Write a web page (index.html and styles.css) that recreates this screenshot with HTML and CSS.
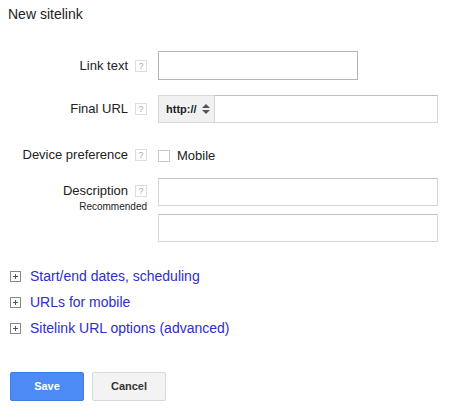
FILE: index.html
```html
<!DOCTYPE html>
<html>
<head>
<meta charset="utf-8">
<link rel="stylesheet" href="styles.css">
</head>
<body>
<div class="page">
  <h1 class="title">New sitelink</h1>
  <div class="form">
    <div class="row row-link">
      <div class="label">Link text</div>
      <div class="help">?</div>
      <div class="field"><div class="input input-short"></div></div>
    </div>
    <div class="row row-url">
      <div class="label">Final URL</div>
      <div class="help">?</div>
      <div class="field url">
        <div class="proto">http://
          <svg class="updown" width="8" height="10" viewBox="0 0 8 10"><path d="M0 4 L4 0 L8 4 Z M0 6 L8 6 L4 10 Z" fill="#555"/></svg>
        </div>
        <div class="input input-url"></div>
      </div>
    </div>
    <div class="row row-device">
      <div class="label">Device preference</div>
      <div class="help">?</div>
      <div class="field check"><span class="box"></span><span class="mobile">Mobile</span></div>
    </div>
    <div class="row row-desc">
      <div class="label">Description<div class="rec">Recommended</div></div>
      <div class="help">?</div>
      <div class="field stack">
        <div class="input input-long"></div>
        <div class="input input-long"></div>
      </div>
    </div>
  </div>
  <div class="expanders">
    <div class="exp"><span class="plus"></span><a class="link">Start/end dates, scheduling</a></div>
    <div class="exp"><span class="plus"></span><a class="link">URLs for mobile</a></div>
    <div class="exp"><span class="plus"></span><a class="link">Sitelink URL options (advanced)</a></div>
  </div>
  <div class="buttons">
    <div class="btn save">Save</div>
    <div class="btn cancel">Cancel</div>
  </div>
</div>
</body>
</html>
```
FILE: styles.css
```css
html, body { margin: 0; padding: 0; background: #fff; }
body { font-family: Arial, "Liberation Sans", sans-serif; color: #222; font-size: 13px; }
.page { width: 449px; height: 409px; position: relative; }
.title { margin: 0; padding: 5px 0 0 8px; font-size: 14px; font-weight: normal; line-height: 18px; color: #222; }
.form { padding-top: 28px; }
.row { display: flex; align-items: flex-start; }
.label { width: 128px; text-align: right; font-size: 13px; line-height: 16px; color: #222; }
.help { width: 10px; height: 10px; margin-left: 7px; border: 1px solid #ddd; font-size: 9px; line-height: 10px; text-align: center; color: #aaa; font-family: Arial, "Liberation Sans", sans-serif; }
.field { margin-left: 11px; }
.input { box-sizing: border-box; border: 1px solid #c0c0c0; border-top-color: #b0b0b0; background: #fff; }
.input-short { width: 200px; height: 29px; border-color: #b5b5b5; }
.row-link .label, .row-link .help { margin-top: 7px; }
.row-link .help { margin-top: 9px; }
.row-url { margin-top: 15px; }
.row-url .label { margin-top: 6px; }
.row-url .help { margin-top: 8px; }
.url { display: flex; }
.proto { box-sizing: border-box; width: 56px; height: 28px; background: #f1f1f1; border: 1px solid #d9d9d9; border-right: none; font-size: 11px; font-weight: bold; line-height: 26px; padding-left: 7px; color: #222; display: flex; align-items: center; gap: 5px; }
.updown { display: block; }
.input-url { width: 224px; height: 28px; border-color: #d5d5d5; border-top-color: #c0c0c0; }
.row-device { margin-top: 26px; }
.row-device .label { margin-top: -2px; }
.check { display: flex; align-items: center; }
.box { box-sizing: border-box; width: 12px; height: 12px; border: 1px solid #c8c8c8; background: #fff; }
.mobile { margin-left: 7px; font-size: 13px; line-height: 14px; color: #222; }
.row-desc { margin-top: 15px; }
.row-desc .label { margin-top: 5px; }
.row-desc .help { margin-top: 7px; }
.rec { font-size: 10px; line-height: 12px; margin-top: 2px; margin-right: -19px; color: #222; }
.stack { display: flex; flex-direction: column; gap: 8px; }
.input-long { width: 280px; height: 28px; border-color: #d5d5d5; border-top-color: #c0c0c0; }
.expanders { margin-top: 25px; padding-left: 10px; display: flex; flex-direction: column; gap: 8px; }
.exp { display: flex; align-items: center; height: 18px; }
.plus { box-sizing: border-box; width: 11px; height: 11px; border: 1px solid #888; position: relative; margin-right: 9px; }
.plus::before { content: ""; position: absolute; left: 2px; top: 4px; width: 5px; height: 1px; background: #555; }
.plus::after { content: ""; position: absolute; left: 4px; top: 2px; width: 1px; height: 5px; background: #555; }
.link { color: #2d2dd2; font-size: 14px; line-height: 18px; text-decoration: none; }
.buttons { display: flex; gap: 8px; margin-top: 35px; padding-left: 10px; }
.btn { box-sizing: border-box; width: 74px; height: 29px; border-radius: 2px; font-size: 11px; font-weight: bold; text-align: center; line-height: 27px; }
.save { background: #4c8bf5; border: 1px solid #3f7ae8; color: #fff; }
.cancel { background: #f3f3f3; border: 1px solid #d8d8d8; color: #333; }
```
